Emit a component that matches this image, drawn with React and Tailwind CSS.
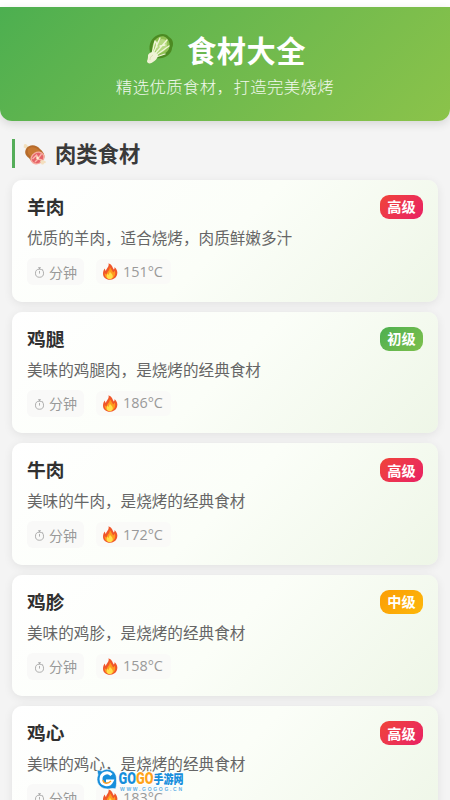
import React from "react";

const ITEMS = [
  { name: "羊肉", desc: "优质的羊肉，适合烧烤，肉质鲜嫩多汁", temp: 151, level: "高级" },
  { name: "鸡腿", desc: "美味的鸡腿肉，是烧烤的经典食材", temp: 186, level: "初级" },
  { name: "牛肉", desc: "美味的牛肉，是烧烤的经典食材", temp: 172, level: "高级" },
  { name: "鸡胗", desc: "美味的鸡胗，是烧烤的经典食材", temp: 158, level: "中级" },
  { name: "鸡心", desc: "美味的鸡心，是烧烤的经典食材", temp: 183, level: "高级" },
];

const LEVEL_STYLES = {
  高级: "bg-linear-135 from-[#f04337] to-[#e91e63]",
  初级: "bg-linear-135 from-[#4caf50] to-[#7cc04c]",
  中级: "bg-linear-135 from-[#fb9d06] to-[#fdb70a]",
};

function CabbageIcon() {
  return (
    <svg viewBox="0 0 28 34" className="h-[34px] w-7 shrink-0" aria-hidden="true">
      <path d="M4 20C2 12 6 5 12 3c4-2 9-1 11 2 4 2 5 7 3 11 0 5-5 9-10 10-5 1-9 0-12-6z" fill="#4c8a22" />
      <path d="M7 21C5 14 8 7 13 5c5-2 9 1 10 5 2 5-1 10-5 12-3 2-7 3-11-1z" fill="#8fc152" />
      <path d="M9 18c-1-5 2-10 7-11 4 0 6 3 5 7-1 5-6 8-11 7z" fill="#b5d87f" />
      <path d="M1 29c1-2 1-4 1-6 1-2 3-3 5-3 3 0 5 2 5 4-1 3-3 5-5 6-2 2-6 2-6-1z" fill="#f1f2d6" />
      <path d="M6 22L9 9M7 22l7-16M8 23L21 8M9 24l14-10M10 25l9-3M11 15l-1-5M14 14l5-1" stroke="#f0f6d8" strokeWidth="1.3" strokeLinecap="round" />
      <path d="M4 28c0-2 1-4 3-5" stroke="#d5dda9" strokeWidth=".8" fill="none" />
    </svg>
  );
}

function MeatIcon() {
  return (
    <svg viewBox="0 0 24 24" className="size-6 shrink-0" aria-hidden="true">
      <path d="M1 4c-1-2 2-3 3-1l4 4-2 2-4-3C1 6 0 5 1 4z" fill="#f2dfbd" />
      <path d="M3 7c3-5 10-5 14 0 5 4 6 9 2 12-5 4-10 2-13-3C3 14 1 11 3 7z" fill="#b66b2b" />
      <path d="M5 7c3-3 8-2 12 2l-7 7C6 14 4 11 5 7z" fill="#c87932" />
      <ellipse cx="14.5" cy="16" rx="7.3" ry="6.2" transform="rotate(-30 14.5 16)" fill="#f7aa9e" />
      <ellipse cx="14.5" cy="16" rx="6" ry="4.8" transform="rotate(-30 14.5 16)" fill="#e56368" />
      <path d="M9.500 17l4-4 2 3 3-4M12 20l3-3 4 1" stroke="#f9b9ac" strokeWidth="1.3" fill="none" />
      <circle cx="14.5" cy="16" r="1.3" fill="#fff0d1" />
      <path d="M19 18l3 1c2 1 0 3-1 2 0 2-3 2-3 0l-1-2z" fill="#f3dfbf" />
    </svg>
  );
}

function FireIcon() {
  return (
    <svg viewBox="0 0 16 17" className="h-[17px] w-4 shrink-0" aria-hidden="true">
      <path d="M6.500.3c4 1.500 4 4.500 5.300 6.200.8-.7.9-1.700.7-2.600C15 6 16 9 15 12c-1.200 3.300-4 4.700-7.200 4.700C4 16.700 1 14.300 1 10.700 1 8.500 1.700 6.600 2.800 5.400c.2 1.300.5 2 1.200 2.600C4 5.500 7.500 4 6.500.3z" fill="#f0562a" />
      <path d="M7.800 4c1.500 2.300 2.600 3.700 3.300 5.400.9-.4 1.300-1 1.700-1.800 1.400 4-.7 8.500-5 8.500-3.500 0-5.400-2.600-5.100-6 .6.900 1.200 1.300 2 1.500C4.800 8.700 8 7.500 7.800 4z" fill="#ff9a1f" />
      <path d="M7.800 8.200c.5 2 3 2.600 3 5 0 1.800-1.300 2.900-3 2.900s-3.100-1.100-3.100-2.900c0-1.200.5-2 .9-2.600.2.800.5 1.300.9 1.500.2-1.400 1.300-2.200 1.300-3.900z" fill="#ffe04a" />
    </svg>
  );
}

function TimerIcon() {
  return (
    <svg viewBox="0 0 12 12" className="mt-0.5 size-[11px] shrink-0" fill="none" stroke="#999" strokeWidth=".85" aria-hidden="true">
      <circle cx="6" cy="6.800" r="4.400" />
      <path d="M4.500.8h3M6 .8v1.600M6 4.300v2.900M9.200 2.600l.8.700" />
    </svg>
  );
}

function IngredientCard({ item }) {
  return (
    <article className="h-[121.600px] shrink-0 rounded-[10px] bg-linear-135 from-white via-[#fbfef8] to-[#eef6e7] px-[15px] pt-[13px] shadow-[0_2px_10px_rgba(0,0,0,0.08)]">
      <div className="flex h-[26px] items-center justify-between">
        <h3 className="text-[18.700px] leading-[26px] font-bold text-[#303030]">{item.name}</h3>
        <span className={`mt-[2px] flex h-6 w-[43px] items-center justify-center rounded-[9px] text-[14.200px] font-bold text-white ${LEVEL_STYLES[item.level]}`}>
          {item.level}
        </span>
      </div>
      <p className="mt-[6px] text-[15.600px] leading-6 whitespace-nowrap text-[#666]">{item.desc}</p>
      <div className="mt-[9px] flex gap-3 text-[14px] leading-[26px] text-[#999]">
        <span className="flex h-[27px] w-[57px] items-center gap-1 rounded-md bg-[#f9f9f8] pl-[7px]">
          <TimerIcon />
          分钟
        </span>
        <span className="mt-[1px] flex h-[25px] w-[75px] items-center gap-[5px] rounded-md bg-[#fafaf8] pl-[6px] whitespace-nowrap">
          <FireIcon />
          <span className="font-['Open_Sans','Noto_Sans_CJK_SC',sans-serif] text-[14.400px]">{item.temp}°C</span>
        </span>
      </div>
    </article>
  );
}

function SiteLogo() {
  return (
    <svg viewBox="0 0 90 26" className="absolute top-[767px] left-[96px] h-[26px] w-[90px]" role="img" aria-label="GOGO手游网">
      <path d="M1 3l5 1C11 0 20 3 20.500 11c0 4 .5 7-1 11-3-1-5 0-8 0C3 22-1 14 2 8z" fill="#168edb" stroke="#fff" strokeWidth=".6" />
      <path d="M15.500 8C12 4 5 6 5 12c0 6 8 8 11 2h-6" fill="none" stroke="#fff" strokeWidth="3" />
      <path d="M7 13c0 3 4 5 8 1" fill="none" stroke="#ff9e21" strokeWidth="1.300" />
      <g fontWeight="900" stroke="#fff" strokeWidth="1.800" strokeLinejoin="round" style={{ paintOrder: "stroke" }}>
        <text x="22.500" y="17" fontFamily="Roboto, sans-serif" fontSize="16" textLength="17.500" lengthAdjust="spacingAndGlyphs" fill="#168edb">GO</text>
        <text x="40" y="17" fontFamily="Roboto, sans-serif" fontSize="16" textLength="17.500" lengthAdjust="spacingAndGlyphs" fill="#ffa31a">GO</text>
        <text x="57.500" y="16.500" fontFamily="Noto Sans CJK SC, sans-serif" fontSize="12.500" textLength="30" lengthAdjust="spacingAndGlyphs" fill="#168edb">手游网</text>
      </g>
      <text x="24" y="23.500" fontFamily="Liberation Sans, sans-serif" fontWeight="700" fontSize="5" textLength="62" fill="#5fb0e2" stroke="#fff" strokeWidth=".8" style={{ paintOrder: "stroke" }}>WWW.GOGOG.CN</text>
    </svg>
  );
}

export default function App() {
  return (
    <div className="relative flex h-[800px] w-full flex-col overflow-hidden bg-[#f4f4f4] font-['Noto_Sans_CJK_SC',sans-serif]">
      <div className="h-[6.500px] shrink-0 bg-white" />
      <header className="flex h-[114.500px] shrink-0 flex-col items-center rounded-b-xl bg-linear-135 from-[#4caf50] to-[#8bc34a] pt-[22px] text-white shadow-[0_3px_10px_rgba(0,0,0,0.12)]">
        <div className="flex h-10 items-center gap-[13px] pl-[2px]">
          <CabbageIcon />
          <h1 className="text-[29.200px] leading-10 font-bold tracking-[0.600px]">食材大全</h1>
        </div>
        <p className="mt-[5px] text-[16.400px] leading-6 font-light tracking-[0.400px] text-white/90">精选优质食材，打造完美烧烤</p>
      </header>
      <main className="flex flex-col px-3 pt-[18px]">
        <div className="flex h-[29px] items-center gap-2 border-l-[3.500px] border-[#55ad59] pl-2">
          <MeatIcon />
          <h2 className="-mt-[2px] text-[21.300px] leading-7 font-bold text-[#3a3a3a]">肉类食材</h2>
        </div>
        <section className="mt-[12px] flex flex-col gap-[10px]">
          {ITEMS.map((item) => (
            <IngredientCard key={item.name} item={item} />
          ))}
        </section>
      </main>
      <SiteLogo />
    </div>
  );
}
